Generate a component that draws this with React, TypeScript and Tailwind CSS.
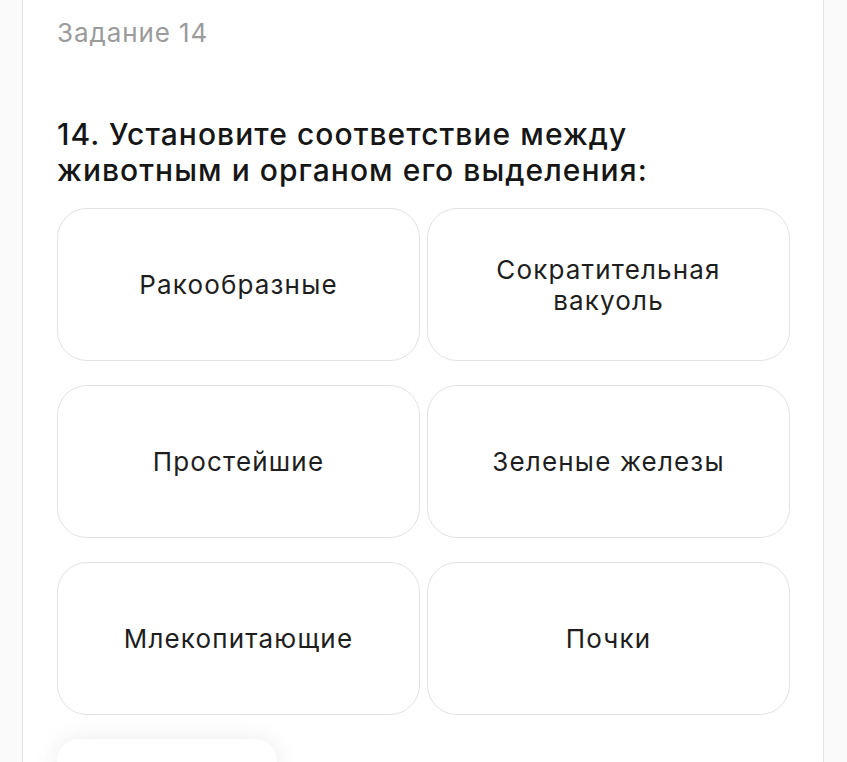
import React from 'react';

const pairs: [string, string][] = [
  ['Ракообразные', 'Сократительная вакуоль'],
  ['Простейшие', 'Зеленые железы'],
  ['Млекопитающие', 'Почки'],
];

function Option({ text }: { text: string }) {
  return (
    <div className="h-[153px] rounded-[30px] border border-[#e2e2e2] bg-white flex items-center justify-center px-16 text-center text-[26px] leading-[31px] tracking-[0.045em] text-[#1e1e1e]">
      {text}
    </div>
  );
}

export default function App() {
  return (
    <div className="min-h-screen h-[762px] overflow-hidden bg-[#fafafa] font-['Inter','Noto_Sans',sans-serif]">
      <div className="ml-[22px] w-[802px] h-full bg-white border-x border-[#e3e3e3] pl-[34px] pr-[33px] pt-[16px]">
        <div className="text-[26px] leading-[34px] text-[#9b9b9b] tracking-[0.035em]">Задание 14</div>

        <h1 className="mt-[66px] text-[30px] leading-[36px] font-medium text-[#161616] tracking-[0.035em]">
          14. Установите соответствие между
          <br />
          животным и органом его выделения:
        </h1>

        <div className="mt-[20px] grid grid-cols-2 gap-x-[7px] gap-y-[24px]">
          {pairs.map(([a, b]) => (
            <React.Fragment key={a}>
              <Option text={a} />
              <Option text={b} />
            </React.Fragment>
          ))}
        </div>

        <div className="mt-[24px] w-[220px] h-[60px] rounded-[22px] bg-white shadow-[0_0_24px_rgba(0,0,0,0.08)]" />
      </div>
    </div>
  );
}
